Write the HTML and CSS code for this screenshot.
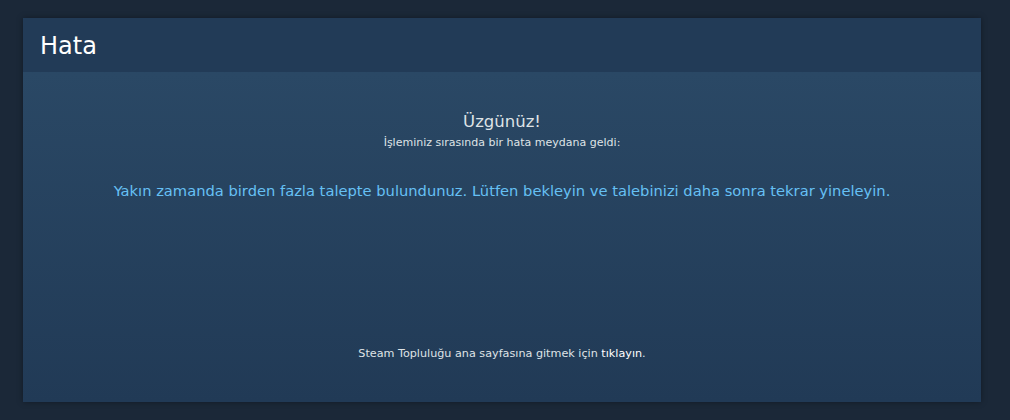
FILE: index.html
```html
<!DOCTYPE html>
<html lang="tr"><head>
	<meta charset="utf-8">
	<title>Hata</title>
	<link rel="stylesheet" href="styles.css">
</head><body>
<div class="page">
	<div class="card">
		<div class="card-head"><h2>Hata</h2></div>
		<div class="card-body">
			<h3>Üzgünüz!</h3>
			<p class="sub">İşleminiz sırasında bir hata meydana geldi:</p>
			<p class="msg">Yakın zamanda birden fazla talepte bulundunuz. Lütfen bekleyin ve talebinizi daha sonra tekrar yineleyin.</p>
			<p class="back">Steam Topluluğu ana sayfasına gitmek için <a href="#">tıklayın</a>.</p>
		</div>
	</div>
</div>
</body></html>
```

FILE: styles.css
```css
* { box-sizing:border-box }
html, body { margin:0; padding:0; height:100% }
body { background:#1b2838; font-family:'DejaVu Sans', Arial, sans-serif; color:#c6d4df }

.page { padding:18px 29px 0 23px }
.card { height:384px; display:flex; flex-direction:column; box-shadow:0 0 6px rgba(0,0,0,0.35) }
.card-head { height:54px; background:#223b57; padding:0 17px; display:flex; align-items:center }
.card-head h2 { margin:0; font-weight:normal; font-size:24px; color:#fff; padding-top:2px }

.card-body { flex:1; background:linear-gradient(to bottom, #2a4865, #213a56); text-align:center; display:flex; flex-direction:column; align-items:center; padding-top:39px }
.card-body h3 { margin:0; font-weight:normal; font-size:16.5px; color:#dfe3e6; line-height:22px }
.sub { margin:3px 0 0; font-size:11px; color:#dfe3e6 }
.msg { margin:33px 0 0; font-size:14.7px; color:#66c0f4 }
.back { margin:auto 0 42px; font-size:11.2px; color:#dfe3e6 }
.back a { color:#fff; text-decoration:none }
```
